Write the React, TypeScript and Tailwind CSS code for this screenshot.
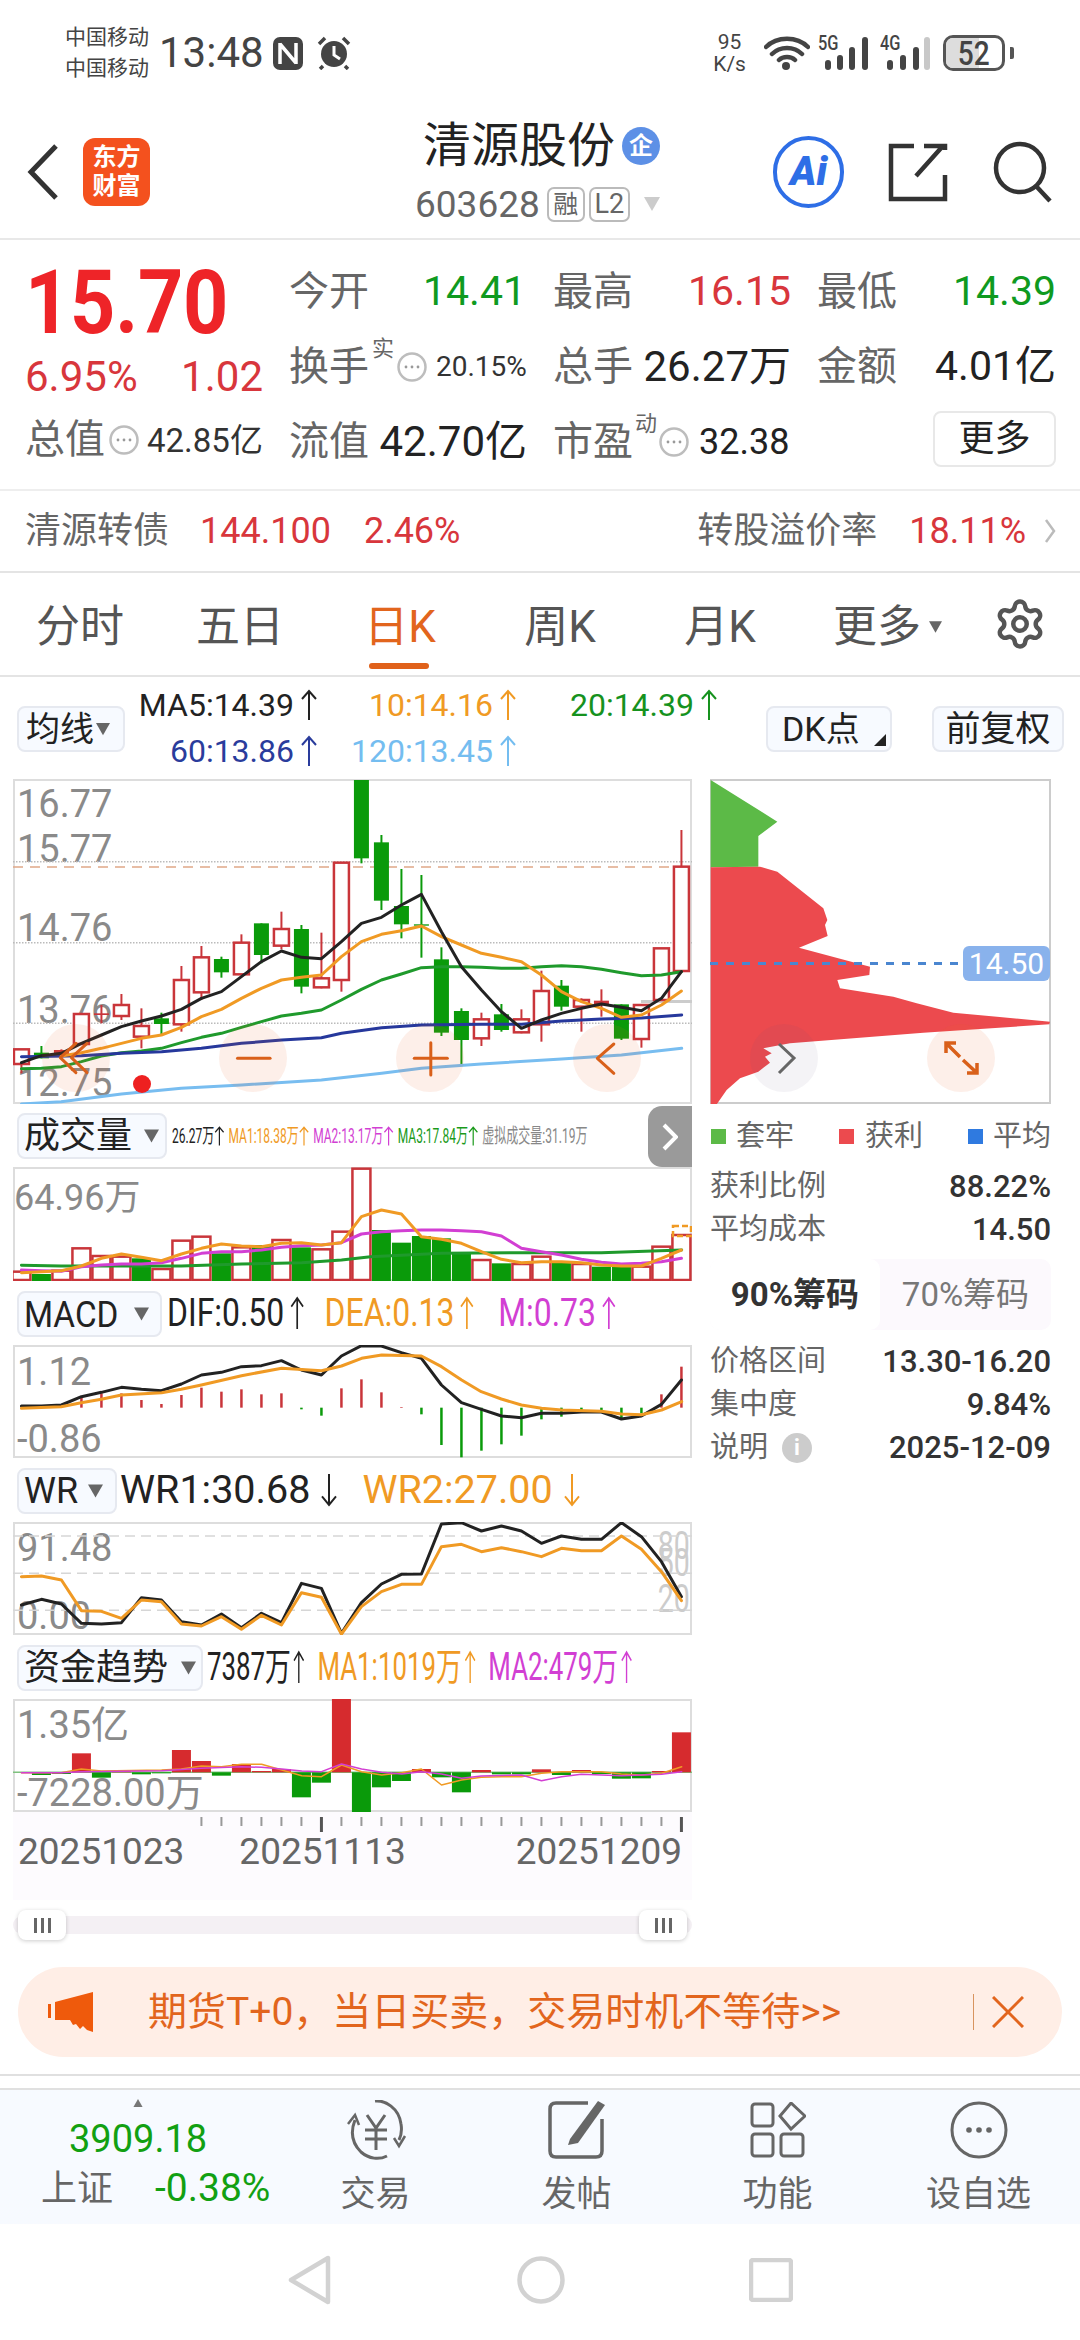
import React from "react";
import { Settings } from "lucide-react";

const RED = "#c9353a";
const GREEN = "#0a9a0a";
const X = (z: number) => z / 2.24;
const line = (pts: number[][], oy: number) => pts.map(([a, b]) => `${X(a)},${oy + b / 3}`).join(" ");
const CX = Array.from({ length: 34 }, (_, i) => 48 + i * 44.8);

type C = [string, number, number, number?, number?];
const candles: C[] = [
  ["r", 1078, 1122, 1078, 1150], ["g", 1088, 1105, 1068, 1105], ["f", 1080, 1095, 1078, 1100], ["r", 972, 1062, 970, 1062],
  ["f", 970, 975, 945, 1000], ["r", 945, 978, 912, 990], ["r", 1008, 1040, 955, 1075], ["g", 985, 1002, 968, 1032],
  ["r", 870, 1003, 828, 1025], ["r", 802, 907, 768, 930], ["g", 807, 847, 800, 863], ["r", 758, 853, 733, 855],
  ["g", 700, 795, 700, 820], ["r", 717, 767, 665, 778], ["g", 717, 890, 705, 910], ["r", 865, 892, 728, 895],
  ["r", 518, 870, 518, 905], ["g", 270, 505, 270, 520], ["g", 457, 632, 435, 660], ["g", 648, 703, 537, 745],
  ["g", 703, 707, 555, 803], ["g", 808, 1028, 772, 1038], ["g", 963, 1050, 955, 1122], ["r", 988, 1045, 968, 1068],
  ["g", 973, 1020, 942, 1025], ["r", 988, 1027, 958, 1030], ["r", 903, 1003, 842, 1055], ["g", 887, 950, 870, 962],
  ["r", 930, 950, 925, 1025], ["f", 932, 942, 898, 980], ["g", 943, 1046, 943, 1050], ["r", 945, 1047, 945, 1073],
  ["r", 775, 930, 775, 930], ["r", 530, 843, 420, 843],
];
const ma5 = [1118, 1097, 1090, 1060, 1035, 1010, 993, 978, 958, 925, 905, 860, 815, 783, 802, 806, 755, 700, 682, 645, 613, 725, 830, 900, 965, 1015, 990, 970, 955, 942, 952, 962, 925, 845];
const ma10 = [1104, 1102, 1098, 1088, 1075, 1060, 1045, 1035, 1012, 980, 958, 925, 895, 870, 862, 855, 800, 755, 733, 722, 708, 740, 765, 790, 802, 815, 855, 905, 935, 955, 982, 975, 945, 903];
const ma20 = [1136, 1135, 1130, 1115, 1098, 1088, 1083, 1075, 1058, 1042, 1030, 1012, 995, 978, 970, 960, 930, 898, 870, 852, 833, 830, 830, 832, 835, 835, 830, 827, 830, 838, 848, 857, 855, 845];
const ma60 = [[48, 1100], [182, 1097], [272, 1090], [362, 1085], [451, 1075], [541, 1060], [631, 1050], [720, 1043], [765, 1030], [855, 1013], [944, 1005], [1078, 1003], [1168, 1003], [1258, 993], [1347, 987], [1437, 984], [1527, 975]];
const ma120 = [[48, 1242], [137, 1235], [272, 1212], [406, 1195], [541, 1185], [720, 1170], [855, 1150], [944, 1135], [1078, 1122], [1258, 1107], [1392, 1095], [1527, 1075]];
const byIdx = (a: number[]) => a.map((v, i) => [CX[i], v]);

const volT: [string, number][] = [["r", 485], ["g", 492], ["r", 482], ["r", 415], ["r", 438], ["r", 440], ["g", 445], ["r", 477], ["r", 392], ["r", 380], ["g", 430], ["r", 412], ["g", 405], ["r", 390], ["g", 412], ["r", 418], ["r", 365], ["r", 176], ["g", 360], ["g", 398], ["g", 378], ["g", 385], ["g", 430], ["r", 450], ["g", 460], ["r", 462], ["r", 440], ["g", 458], ["r", 462], ["g", 470], ["g", 470], ["r", 470], ["r", 410], ["r", 375]];
const volA = [488, 485, 482, 468, 445, 432, 442, 452, 432, 415, 402, 408, 410, 400, 398, 405, 398, 320, 300, 312, 380, 388, 400, 425, 448, 458, 455, 455, 458, 465, 468, 468, 445, 420];
const volB = [480, 482, 484, 470, 465, 462, 462, 458, 445, 430, 425, 425, 420, 412, 407, 405, 398, 372, 365, 362, 360, 360, 362, 365, 378, 415, 425, 435, 448, 457, 462, 460, 455, 445];
const volC = [[48, 466], [137, 468], [272, 468], [406, 468], [541, 462], [676, 458], [765, 450], [830, 440], [989, 430], [1168, 428], [1347, 428], [1527, 420]];

const macdT = [0, 0, 0, 860, 850, 850, 870, 882, 855, 833, 845, 838, 853, 850, 898, 917, 835, 808, 847, 891, 913, 1005, 1042, 1022, 1003, 977, 928, 920, 908, 905, 925, 910, 853, 770];
const dif = [888, 888, 885, 860, 847, 832, 838, 842, 822, 795, 787, 770, 767, 752, 780, 795, 738, 707, 708, 728, 745, 825, 878, 898, 918, 923, 910, 910, 906, 906, 927, 918, 883, 810];
const dea = [[48, 895], [137, 890], [182, 878], [227, 868], [272, 855], [362, 848], [406, 838], [451, 825], [541, 797], [631, 775], [720, 782], [765, 768], [810, 745], [855, 735], [944, 738], [989, 770], [1034, 810], [1078, 845], [1123, 867], [1168, 885], [1213, 895], [1258, 900], [1347, 904], [1392, 912], [1437, 914], [1482, 900], [1527, 875]];

const wr1 = [405, 388, 402, 460, 462, 458, 383, 390, 455, 465, 432, 473, 430, 458, 340, 355, 490, 398, 342, 313, 312, 162, 158, 183, 168, 183, 220, 198, 208, 208, 158, 200, 275, 380];
const wr2 = [320, 318, 330, 422, 424, 445, 390, 395, 462, 468, 440, 478, 436, 465, 368, 382, 492, 410, 365, 343, 343, 230, 223, 245, 233, 245, 260, 235, 242, 242, 198, 238, 305, 392];

const fundT = [907, 915, 912, 850, 923, 903, 913, 910, 840, 873, 917, 882, 903, 897, 982, 938, 687, 1026, 952, 933, 897, 922, 967, 900, 913, 913, 898, 915, 900, 912, 926, 925, 903, 787];
const fundA = [[48, 908], [137, 908], [182, 897], [227, 903], [362, 900], [406, 897], [451, 888], [496, 890], [541, 883], [586, 883], [631, 900], [676, 917], [720, 920], [765, 885], [810, 905], [855, 915], [900, 908], [944, 897], [989, 945], [1034, 930], [1078, 922], [1123, 920], [1168, 920], [1213, 910], [1258, 905], [1347, 905], [1392, 912], [1437, 915], [1482, 910], [1527, 890]];
const fundB = [[48, 908], [137, 908], [182, 905], [362, 902], [451, 895], [541, 890], [586, 892], [631, 897], [676, 903], [720, 905], [765, 882], [810, 897], [855, 907], [900, 912], [944, 905], [989, 912], [1034, 925], [1078, 918], [1168, 915], [1213, 932], [1258, 920], [1302, 913], [1392, 917], [1437, 915], [1482, 913], [1527, 905]];

function PL({ pts, oy, c, w = 3 }: { pts: number[][]; oy: number; c: string; w?: number }) {
  return <polyline points={line(pts, oy)} fill="none" stroke={c} strokeWidth={w} strokeLinejoin="round" strokeLinecap="round" />;
}

function Plot({ top, h, children }: { top: number; h: number; children: React.ReactNode }) {
  return (
    <svg className="absolute inset-0 block" width={679} height={h} viewBox={`13 ${top} 679 ${h}`}>
      {children}
    </svg>
  );
}

function Tri({ c = "#666", w = 16, h = 14, up = false }: { c?: string; w?: number; h?: number; up?: boolean }) {
  return (
    <svg width={w} height={h} viewBox="0 0 16 14" className="block shrink-0">
      <path d={up ? "M8 0 16 14H0Z" : "M0 0H16L8 14Z"} fill={c} />
    </svg>
  );
}

function Arrow({ c, down = false, h = 32 }: { c: string; down?: boolean; h?: number }) {
  return (
    <svg width={18} height={h} viewBox="0 0 18 32" className="block shrink-0" preserveAspectRatio="none">
      {down ? (
        <path d="M9 1V30M2 22l7 8 7-8" fill="none" stroke={c} strokeWidth={2} />
      ) : (
        <path d="M9 31V2M2 10l7-8 7 8" fill="none" stroke={c} strokeWidth={2} />
      )}
    </svg>
  );
}

function Dots() {
  return (
    <svg width={30} height={30} viewBox="0 0 30 30" className="block shrink-0">
      <circle cx={15} cy={15} r={13.5} fill="none" stroke="#bdbdbd" strokeWidth={2.5} />
      <circle cx={9} cy={15} r={1.4} fill="#999" />
      <circle cx={15} cy={15} r={1.4} fill="#999" />
      <circle cx={21} cy={15} r={1.4} fill="#999" />
    </svg>
  );
}

function Sel({ className, children }: { className: string; children: React.ReactNode }) {
  return (
    <div className={`flex h-[46px] shrink-0 items-center rounded-[8px] border-2 border-[#e6e9f0] bg-[#f7faff] text-[#222] ${className}`}>
      {children}
    </div>
  );
}

function Signal({ label, bars, last }: { label: string; bars: number[]; last: string }) {
  const hs = [10, 15, 23, 33];
  return (
    <div className="relative h-[36px] w-[52px] shrink-0">
      <svg width={52} height={36} viewBox="0 0 52 36" className="absolute inset-0">
        {bars.map((x, i) => (
          <rect key={i} x={x} y={35 - hs[i]} width={6} height={hs[i]} rx={3} fill={i === 3 ? last : "#444"} />
        ))}
      </svg>
      <span className="absolute left-0 top-[-2px] origin-left scale-x-[0.78] text-[21px] font-medium leading-[21px] text-[#444]">{label}</span>
    </div>
  );
}

function Kv({ k, v }: { k: React.ReactNode; v: string }) {
  return (
    <div className="flex h-[43px] items-center justify-between">
      <span className="text-[29px] leading-none text-[#666]">{k}</span>
      <span className="text-[31px] font-medium leading-none text-[#333]">{v}</span>
    </div>
  );
}

function AppIcon({ label, children }: { label: string; children: React.ReactNode }) {
  return (
    <div className="flex w-[201px] shrink-0 flex-col items-center pt-[8px]">
      <div className="flex h-[64px] items-center justify-center">{children}</div>
      <span className="mt-[15px] text-[35px] leading-none text-[#666]">{label}</span>
    </div>
  );
}

const axis = "absolute text-[38px] leading-none text-[#8a8a8a]";

export default function App() {
  return (
    <div className="relative h-[2340px] w-[1080px] overflow-hidden bg-white font-[family-name:Roboto,'Noto_Sans_CJK_SC',sans-serif]">
      {/* status bar */}
      <div className="flex h-[100px] items-center pl-[65px] pt-[6px]">
        <div className="flex flex-col text-[21px] leading-[31px] text-[#444]">
          <span>中国移动</span>
          <span>中国移动</span>
        </div>
        <span className="ml-[10px] text-[42px] leading-none text-[#444]">13:48</span>
        <svg width={30} height={33} viewBox="0 0 30 33" className="ml-[9px] block shrink-0">
          <rect width={30} height={33} rx={7} fill="#444" />
          <path d="M7 6v21M7 7l16 19M23 6v21" fill="none" stroke="#fff" strokeWidth={3.5} />
        </svg>
        <svg width={34} height={34} viewBox="0 0 34 34" className="ml-[14px] block shrink-0">
          <circle cx={17} cy={18} r={13} fill="#444" />
          <path d="M17 10v9l6 4" fill="none" stroke="#fff" strokeWidth={3} />
          <path d="M2 8 8 2M32 8l-6-6M6 30l-3 3M28 30l3 3" stroke="#444" strokeWidth={3.5} />
        </svg>
        <div className="ml-[361px] flex w-[36px] flex-col items-center text-[#444]">
          <span className="text-[21px] leading-[22px]">95</span>
          <span className="text-[21px] leading-[22px]">K/s</span>
        </div>
        <svg width={46} height={36} viewBox="0 0 46 36" className="ml-[16px] block shrink-0">
          <path d="M2 12C13 1 33 1 44 12M8 19C16 11 30 11 38 19M15 25C19 21 27 21 31 25" fill="none" stroke="#444" strokeWidth={4.5} strokeLinecap="round" />
          <circle cx={22} cy={31} r={4} fill="#444" />
        </svg>
        <div className="ml-[8px]">
          <Signal label="5G" bars={[7, 19, 31, 44]} last="#444" />
        </div>
        <div className="ml-[10px]">
          <Signal label="4G" bars={[7, 20, 33, 44]} last="#c8c8c8" />
        </div>
        <div className="relative ml-[11px] flex h-[36px] w-[62px] items-center justify-center overflow-hidden rounded-[10px] border-[3px] border-[#555]">
          <div className="absolute inset-y-0 left-0 w-[33px] bg-[#dddddd]" />
          <span className="relative origin-center scale-x-[0.85] text-[33px] font-medium leading-none text-[#444]">52</span>
        </div>
        <div className="ml-[5px] h-[12px] w-[4px] rounded-r-[2px] bg-[#555]" />
      </div>

      {/* title bar */}
      <div className="flex h-[140px] items-center border-b-2 border-[#e8e8e8] pt-[6px]">
        <svg width={32} height={56} viewBox="0 0 32 56" className="ml-[27px] block shrink-0">
          <path d="M29 2 4 28l25 26" fill="none" stroke="#333" strokeWidth={5} strokeLinejoin="miter" />
        </svg>
        <div className="ml-[24px] flex h-[68px] w-[67px] shrink-0 flex-col items-center justify-center rounded-[12px] bg-[#f4511e] text-[24px] font-bold leading-[29px] text-[#fff]">
          <span>东方</span>
          <span>财富</span>
        </div>
        <div className="ml-[265px] flex w-[250px] shrink-0 flex-col">
          <div className="flex h-[52px] items-center pl-[8px]">
            <span className="text-[48px] leading-none text-[#222]">清源股份</span>
            <span className="ml-[7px] flex h-[38px] w-[38px] items-center justify-center rounded-full bg-[#5d90e6] text-[24px] font-bold leading-none text-white">企</span>
          </div>
          <div className="mt-[12px] flex h-[40px] items-center">
            <span className="text-[37px] leading-none text-[#666]">603628</span>
            <span className="ml-[7px] flex h-[35px] w-[38px] items-center justify-center rounded-[7px] border-2 border-[#bbb] text-[25px] leading-none text-[#666]">融</span>
            <span className="ml-[4px] flex h-[35px] w-[41px] items-center justify-center rounded-[7px] border-2 border-[#bbb] text-[27px] leading-none text-[#666]">L2</span>
            <div className="ml-[12px]">
              <Tri c="#cccccc" w={20} h={14} />
            </div>
          </div>
        </div>
        <div className="relative ml-[108px] flex h-[72px] w-[71px] shrink-0 items-center justify-center rounded-full border-[4px] border-[#2e6ee6]">
          <span className="text-[40px] font-black italic leading-none text-[#2e6ee6]">Ai</span>
        </div>
        <svg width={60} height={60} viewBox="0 0 60 60" className="ml-[44px] block shrink-0">
          <path d="M26 4H3v53h54V33" fill="none" stroke="#333" strokeWidth={4.5} />
          <path d="M28 34 54 5M36 4h21v4" fill="none" stroke="#333" strokeWidth={4.5} />
        </svg>
        <svg width={62} height={62} viewBox="0 0 62 62" className="ml-[44px] block shrink-0">
          <circle cx={28} cy={27} r={24} fill="none" stroke="#333" strokeWidth={4.5} />
          <path d="M44 45 58 60" fill="none" stroke="#333" strokeWidth={4.5} />
        </svg>
      </div>

      {/* quote */}
      <div className="flex h-[251px] border-b-2 border-[#eeeeee] pt-[13px]">
        <div className="w-[289px] shrink-0 pl-[25px] pr-[26px]">
          <div className="flex h-[96px] items-center pt-[4px]">
            <span className="origin-left scale-y-[1.13] text-[79px] font-bold leading-none tracking-[-0.2px] text-[#ee2428]">15.70</span>
          </div>
          <div className="flex h-[56px] items-center justify-between text-[42px] leading-none text-[#d8363c]">
            <span>6.95%</span>
            <span>1.02</span>
          </div>
          <div className="flex h-[70px] items-center whitespace-nowrap">
            <span className="text-[40px] leading-none text-[#666]">总值</span>
            <div className="ml-[4px]">
              <Dots />
            </div>
            <span className="ml-[8px] text-[33px] leading-none text-[#333]">42.85亿</span>
          </div>
        </div>
        <div className="grid h-[225px] grid-cols-[264px_264px_239px] grid-rows-[75px_75px_75px] whitespace-nowrap pt-[1px] text-[40px] leading-none">
          <div className="flex items-center justify-between pr-[27px]"><span className="text-[#666]">今开</span><span className="text-[41px] text-[#0f9a1f]">14.41</span></div>
          <div className="flex items-center justify-between pr-[26px]"><span className="text-[#666]">最高</span><span className="text-[41px] text-[#d8363c]">16.15</span></div>
          <div className="flex items-center justify-between"><span className="text-[#666]">最低</span><span className="text-[41px] text-[#0f9a1f]">14.39</span></div>

          <div className="flex items-center">
            <span className="text-[#666]">换手</span>
            <span className="mb-[36px] ml-[3px] text-[22px] leading-none text-[#666]">实</span>
            <div className="ml-[3px]"><Dots /></div>
            <span className="ml-[9px] text-[28px] text-[#333]">20.15%</span>
          </div>
          <div className="flex items-center justify-between pr-[26px]"><span className="text-[#666]">总手</span><span className="text-[42px] text-[#222]">26.27万</span></div>
          <div className="flex items-center justify-between"><span className="text-[#666]">金额</span><span className="text-[41px] text-[#222]">4.01亿</span></div>

          <div className="flex items-center justify-between pr-[26px]"><span className="text-[#666]">流值</span><span className="text-[42px] text-[#222]">42.70亿</span></div>
          <div className="flex items-center">
            <span className="text-[#666]">市盈</span>
            <span className="mb-[36px] ml-[2px] text-[22px] leading-none text-[#666]">动</span>
            <div className="ml-[2px]"><Dots /></div>
            <span className="ml-[10px] text-[36px] text-[#222]">32.38</span>
          </div>
          <div className="flex items-center justify-end">
            <div className="mt-[-6px] flex h-[56px] w-[123px] items-center justify-center rounded-[8px] border-2 border-[#e8e8e8] text-[36px] text-[#222]">更多</div>
          </div>
        </div>
      </div>

      {/* bond */}
      <div className="flex h-[82px] items-center border-b-2 border-[#e4e4e4] pl-[25px] pr-[24px] text-[36px] leading-none">
        <span className="text-[#666]">清源转债</span>
        <span className="ml-[31px] text-[#d8363c]">144.100</span>
        <span className="ml-[33px] text-[#d8363c]">2.46%</span>
        <span className="ml-auto text-[#666]">转股溢价率</span>
        <span className="ml-[32px] text-[#d8363c]">18.11%</span>
        <svg width={12} height={26} viewBox="0 0 12 26" className="ml-[18px] block shrink-0">
          <path d="M2 2 10 13 2 24" fill="none" stroke="#bbb" strokeWidth={2.5} />
        </svg>
      </div>

      {/* tabs */}
      <div className="flex h-[104px] items-center border-b-2 border-[#e4e4e4] pt-[6px] text-[44px] leading-none text-[#555]">
        <div className="w-[160px] shrink-0 text-center">分时</div>
        <div className="w-[160px] shrink-0 text-center">五日</div>
        <div className="relative flex h-full w-[160px] shrink-0 items-center justify-center text-[#e2651d]">
          <span>日K</span>
          <div className="absolute bottom-[6px] left-[49px] h-[6px] w-[60px] rounded-[3px] bg-[#e0611a]" />
        </div>
        <div className="w-[160px] shrink-0 text-center">周K</div>
        <div className="w-[160px] shrink-0 text-center">月K</div>
        <div className="flex w-[160px] shrink-0 items-center pl-[33px]">
          <span>更多</span>
          <div className="ml-[8px]"><Tri c="#666" w={13} h={12} /></div>
        </div>
        <Settings className="ml-[33px] mt-[-6px] shrink-0" size={54} strokeWidth={2} color="#555" />
      </div>

      {/* MA legend */}
      <div className="flex h-[102px] items-start">
        <Sel className="ml-[17px] mt-[29px] w-[108px] pl-[7px]">
          <span className="text-[34px] leading-none">均线</span>
          <div className="ml-[2px]"><Tri w={14} h={14} /></div>
        </Sel>
        <div className="ml-[15px] mt-[5px] grid w-[578px] shrink-0 grid-cols-[178px_199px_201px] grid-rows-[46px_46px] text-[32px] leading-none">
          <div className="flex items-center justify-end gap-[6px] text-[#222]">MA5:14.39<Arrow c="#222" /></div>
          <div className="flex items-center justify-end gap-[6px] text-[#f09a24]">10:14.16<Arrow c="#f09a24" /></div>
          <div className="flex items-center justify-end gap-[6px] text-[#16921e]">20:14.39<Arrow c="#16921e" /></div>
          <div className="flex items-center justify-end gap-[6px] text-[#2a3c9c]">60:13.86<Arrow c="#2a3c9c" /></div>
          <div className="flex items-center justify-end gap-[6px] text-[#74bdf0]">120:13.45<Arrow c="#74bdf0" /></div>
        </div>
        <Sel className="relative ml-[48px] mt-[29px] w-[126px] justify-start pl-[14px]">
          <span className="text-[34px] leading-none">DK点</span>
          <svg width={12} height={12} viewBox="0 0 12 12" className="absolute bottom-[4px] right-[4px] block">
            <path d="M12 0V12H0Z" fill="#222" />
          </svg>
        </Sel>
        <Sel className="ml-[40px] mt-[29px] w-[132px] justify-center">
          <span className="text-[35px] leading-none">前复权</span>
        </Sel>
      </div>

      <div className="flex">
        {/* left charts */}
        <div className="ml-[13px] w-[679px] shrink-0">
          <div className="relative h-[325px] overflow-hidden outline-2 -outline-offset-2 outline-[#dddddd]">
            <span className={`${axis} left-[4px] top-[6px]`}>16.77</span>
            <span className={`${axis} left-[4px] top-[51px]`}>15.77</span>
            <span className={`${axis} left-[4px] top-[130px]`}>14.76</span>
            <span className={`${axis} left-[4px] top-[212px]`}>13.76</span>
            <span className={`${axis} left-[4px] top-[285px]`}>12.75</span>
            <Plot top={779} h={325}>
              {[515, 758, 1000].map((z) => (
                <line key={z} x1={13} x2={692} y1={690 + z / 3} y2={690 + z / 3} stroke="#bbbbbb" strokeWidth={1.5} strokeDasharray="1.5 1.5" />
              ))}
              <line x1={13} x2={692} y1={867} y2={867} stroke="#e0a888" strokeWidth={1.5} strokeDasharray="10 7" />
              <rect x={641} y={1000} width={51} height={3} fill="#cccccc" />
              {candles.map(([t, a, b, h, l], i) => {
                const cx = X(CX[i]);
                const col = t === "g" ? GREEN : RED;
                return (
                  <g key={i}>
                    <line x1={cx} x2={cx} y1={690 + (h ?? a) / 3} y2={690 + (l ?? b) / 3} stroke={col} strokeWidth={2} />
                    <rect x={cx - 7.5} y={690 + a / 3} width={15} height={(b - a) / 3} fill={t === "r" ? "#fff" : col} stroke={t === "r" ? RED : "none"} strokeWidth={2.5} />
                  </g>
                );
              })}
              <PL pts={byIdx(ma20)} oy={690} c="#1f9a2c" />
              <PL pts={ma60} oy={690} c="#26389c" />
              <PL pts={ma120} oy={690} c="#78bdf0" />
              <PL pts={byIdx(ma10).slice(2)} oy={690} c="#f09a24" />
              <PL pts={byIdx(ma5)} oy={690} c="#222222" />
              <circle cx={142} cy={1084} r={9} fill="#ee2020" />
              {[76, 253, 430, 607].map((cx) => (
                <circle key={cx} cx={cx} cy={1058} r={34} fill="#e8602a" fillOpacity={0.1} />
              ))}
              <PL pts={[[170, 1060], [135, 1103], [170, 1148]]} oy={690} c="#d9601a" />
              <PL pts={[[195, 1060], [160, 1103], [195, 1148]]} oy={690} c="#d9601a" />
              <PL pts={[[532, 1105], [605, 1105]]} oy={690} c="#d9601a" />
              <PL pts={[[928, 1105], [1002, 1105]]} oy={690} c="#d9601a" />
              <PL pts={[[965, 1058], [965, 1155]]} oy={690} c="#d9601a" />
              <PL pts={[[1375, 1062], [1338, 1105], [1375, 1150]]} oy={690} c="#d9601a" />
            </Plot>
          </div>

          {/* volume header */}
          <div className="relative flex h-[63px] items-start pl-[4px] pt-[9px]">
            <Sel className="w-[150px] pl-[5px]">
              <span className="text-[36px] leading-none">成交量</span>
              <div className="ml-[12px]"><Tri w={15} h={14} /></div>
            </Sel>
            <div className="ml-[5px] mt-[13px] flex shrink-0 origin-left scale-x-[0.6] whitespace-nowrap text-[20px] leading-none">
              <span className="flex items-center text-[#222]">26.27万<Arrow c="#222" h={20} /></span>
              <span className="ml-[6px] flex items-center text-[#f09a24]">MA1:18.38万<Arrow c="#f09a24" h={20} /></span>
              <span className="ml-[6px] flex items-center text-[#d23fd3]">MA2:13.17万<Arrow c="#d23fd3" h={20} /></span>
              <span className="ml-[6px] flex items-center text-[#1a9a1a]">MA3:17.84万<Arrow c="#1a9a1a" h={20} /></span>
              <span className="ml-[6px] text-[#888]">虚拟成交量:31.19万</span>
            </div>
            <div className="absolute right-0 top-[2px] flex h-[61px] w-[44px] items-center justify-center rounded-bl-[14px] rounded-tl-[14px] bg-[#9a9a9a]">
              <svg width={16} height={28} viewBox="0 0 16 28" className="block">
                <path d="M2 2 14 14 2 26" fill="none" stroke="#fff" strokeWidth={4} />
              </svg>
            </div>
          </div>
          <div className="relative h-[114px] overflow-hidden outline-2 -outline-offset-2 outline-[#dddddd]">
            <span className="absolute left-[1px] top-[13px] text-[36px] leading-none text-[#8a8a8a]">64.96万</span>
            <Plot top={1167} h={114}>
              {volT.map(([t, z], i) => {
                const cx = X(CX[i]);
                const y = 1110 + z / 3;
                return t === "g" ? (
                  <rect key={i} x={cx - 9.5} y={y} width={19} height={1281 - y} fill={GREEN} />
                ) : (
                  <rect key={i} x={cx - 9} y={y} width={18} height={1280 - y} fill="#fff" stroke={RED} strokeWidth={2.5} />
                );
              })}
              <rect x={673} y={1226} width={18} height={10} fill="none" stroke="#f09a24" strokeWidth={2.5} strokeDasharray="6 3" />
              <PL pts={volC} oy={1110} c="#1f9a2c" />
              <PL pts={byIdx(volB)} oy={1110} c="#d23fd3" />
              <PL pts={byIdx(volA)} oy={1110} c="#f09a24" />
            </Plot>
          </div>

          {/* MACD */}
          <div className="flex h-[64px] items-start pl-[4px] pt-[10px]">
            <Sel className="w-[145px] pl-[5px]">
              <span className="origin-left scale-x-[0.9] text-[37px] leading-none">MACD</span>
              <div className="ml-[5px]"><Tri w={15} h={14} /></div>
            </Sel>
            <div className="ml-[5px] flex shrink-0 origin-left scale-x-[0.84] items-center whitespace-nowrap pt-[3px] text-[38px] leading-none">
              <span className="flex items-center text-[#222]">DIF:0.50<span className="ml-[6px]"><Arrow c="#222" h={34} /></span></span>
              <span className="ml-[24px] flex items-center text-[#f09a24]">DEA:0.13<span className="ml-[6px]"><Arrow c="#f09a24" h={34} /></span></span>
              <span className="ml-[28px] flex items-center text-[#d23fd3]">M:0.73<span className="ml-[6px]"><Arrow c="#d23fd3" h={34} /></span></span>
            </div>
          </div>
          <div className="relative h-[113px] overflow-hidden outline-2 -outline-offset-2 outline-[#dddddd]">
            <span className={`${axis} left-[4px] top-[8px]`}>1.12</span>
            <span className={`${axis} left-[4px] top-[75px]`}>-0.86</span>
            <Plot top={1345} h={113}>
              {macdT.map((z, i) =>
                z === 0 ? null : (
                  <line key={i} x1={X(CX[i])} x2={X(CX[i])} y1={1110 + z / 3} y2={1110 + 893 / 3} stroke={z < 893 ? RED : GREEN} strokeWidth={2.5} />
                )
              )}
              <PL pts={byIdx(dif)} oy={1110} c="#222222" />
              <PL pts={dea} oy={1110} c="#f09a24" />
            </Plot>
          </div>

          {/* WR */}
          <div className="flex h-[64px] items-start pl-[4px] pt-[10px]">
            <Sel className="w-[100px] pl-[5px]">
              <span className="text-[36px] leading-none">WR</span>
              <div className="ml-[10px]"><Tri w={15} h={14} /></div>
            </Sel>
            <div className="ml-[3px] flex shrink-0 items-center whitespace-nowrap pt-[2px] text-[39.5px] leading-none">
              <span className="flex items-center text-[#222]">WR1:30.68<span className="ml-[10px]"><Arrow c="#222" down h={34} /></span></span>
              <span className="ml-[24px] flex items-center text-[#f09a24]">WR2:27.00<span className="ml-[10px]"><Arrow c="#f09a24" down h={34} /></span></span>
            </div>
          </div>
          <div className="relative h-[113px] overflow-hidden outline-2 -outline-offset-2 outline-[#dddddd]">
            <span className={`${axis} left-[4px] top-[7px]`}>91.48</span>
            <span className={`${axis} left-[4px] top-[75px]`}>0.00</span>
            <span className="absolute right-[2px] top-[5px] origin-right scale-x-[0.75] text-[38px] leading-none text-[#cccccc]">80</span>
            <span className="absolute right-[2px] top-[22px] origin-right scale-x-[0.75] text-[38px] leading-none text-[#cccccc]">50</span>
            <span className="absolute right-[2px] top-[58px] origin-right scale-x-[0.75] text-[38px] leading-none text-[#cccccc]">20</span>
            <Plot top={1522} h={113}>
              {[198, 310, 421].map((z) => (
                <line key={z} x1={13} x2={692} y1={1470 + z / 3} y2={1470 + z / 3} stroke="#d6d6d6" strokeWidth={1.5} strokeDasharray="10 6" />
              ))}
              <PL pts={byIdx(wr1)} oy={1470} c="#222222" />
              <PL pts={byIdx(wr2)} oy={1470} c="#f09a24" />
            </Plot>
          </div>

          {/* funds */}
          <div className="flex h-[64px] items-start pl-[4px] pt-[10px]">
            <Sel className="w-[186px] pl-[5px]">
              <span className="text-[36px] leading-none">资金趋势</span>
              <div className="ml-[13px]"><Tri w={15} h={14} /></div>
            </Sel>
            <div className="ml-[4px] flex shrink-0 origin-left scale-x-[0.68] items-center whitespace-nowrap pt-[3px] text-[38px] leading-none">
              <span className="flex items-center text-[#222]">7387万<span className="ml-[3px]"><Arrow c="#222" h={34} /></span></span>
              <span className="ml-[18px] flex items-center text-[#f09a24]">MA1:1019万<span className="ml-[3px]"><Arrow c="#f09a24" h={34} /></span></span>
              <span className="ml-[18px] flex items-center text-[#d23fd3]">MA2:479万<span className="ml-[3px]"><Arrow c="#d23fd3" h={34} /></span></span>
            </div>
          </div>
          <div className="relative h-[113px] overflow-hidden outline-2 -outline-offset-2 outline-[#dddddd]">
            <span className={`${axis} left-[4px] top-[7px]`}>1.35亿</span>
            <span className={`${axis} left-[4px] top-[75px]`}>-7228.00万</span>
            <Plot top={1699} h={113}>
              <line x1={13} x2={692} y1={1470 + 907 / 3} y2={1470 + 907 / 3} stroke="#7fc27f" strokeWidth={1.5} />
              {fundT.map((z, i) => {
                const y0 = 1470 + 907 / 3;
                const y1 = 1470 + z / 3;
                return <rect key={i} x={X(CX[i]) - 9.5} y={Math.min(y0, y1)} width={19} height={Math.abs(y1 - y0)} fill={z < 907 ? "#d62b2e" : GREEN} />;
              })}
              <PL pts={fundA} oy={1470} c="#f09a24" w={1.5} />
              <PL pts={fundB} oy={1470} c="#d23fd3" w={1.5} />
            </Plot>
          </div>

          {/* date axis */}
          <div className="relative h-[88px] bg-[#fdfbfe] pt-[21px]">
            <svg width={679} height={30} viewBox="13 1812 679 30" className="absolute left-0 top-0 block">
              {CX.slice(9).map((z, i) => {
                const long = (z > 715 && z < 725) || i === CX.length - 10;
                return <line key={i} x1={X(z)} x2={X(z)} y1={1817} y2={long ? 1832 : 1826} stroke={long ? "#555" : "#999"} strokeWidth={long ? 3 : 2} />;
              })}
            </svg>
            <div className="flex text-[37px] leading-[38px] text-[#666]">
              <span className="ml-[5px]">20251023</span>
              <span className="ml-[55px]">20251113</span>
              <span className="ml-[110px]">20251209</span>
            </div>
          </div>

          {/* slider */}
          <div className="relative mt-[10px] flex h-[30px] justify-between px-[5px]">
            <div className="absolute inset-x-0 top-[6px] h-[18px] rounded-[9px] bg-[#f4f0f4]" />
            {[0, 1].map((k) => (
              <div key={k} className="relative flex h-[30px] w-[48px] items-center justify-center gap-[4px] rounded-[8px] bg-white shadow-[0_1px_4px_rgba(0,0,0,0.2)]">
                <div className="h-[15px] w-[3px] bg-[#666]" />
                <div className="h-[15px] w-[3px] bg-[#666]" />
                <div className="h-[15px] w-[3px] bg-[#666]" />
              </div>
            ))}
          </div>
        </div>

        {/* right panel */}
        <div className="ml-[18px] w-[341px] shrink-0">
          <div className="relative h-[325px] overflow-hidden outline-2 -outline-offset-2 outline-[#cccccc]">
            <svg className="absolute inset-0 block" width={341} height={325} viewBox="710 779 341 325">
              <polygon
                fill="#5cba47"
                points={[[62, 270], [262, 395], [205, 438], [205, 530], [62, 532]].map(([a, b]) => `${690 + a / 3},${690 + b / 3}`).join(" ")}
              />
              <polygon
                fill="#ec4a4e"
                points={[[62, 532], [210, 530], [262, 545], [400, 655], [412, 690], [405, 705], [413, 738], [327, 773], [540, 830], [538, 855], [442, 870], [450, 895], [610, 920], [680, 940], [790, 968], [1080, 995], [1078, 1003], [700, 1028], [300, 1060], [220, 1075], [245, 1090], [225, 1100], [240, 1118], [205, 1145], [150, 1165], [110, 1200], [80, 1243], [62, 1243]].map(([a, b]) => `${690 + a / 3},${690 + b / 3}`).join(" ")}
              />
              <line x1={710} x2={958} y1={963.5} y2={963.5} stroke="#4a86d0" strokeWidth={3} strokeDasharray="8 8" />
              <circle cx={784} cy={1058} r={34} fill="#6a5a7a" fillOpacity={0.07} />
              <path d="M779 1044 794 1058 779 1073" fill="none" stroke="#666" strokeWidth={3} />
              <circle cx={961} cy={1058} r={34} fill="#e8602a" fillOpacity={0.1} />
              <path d="M946 1043 960 1057M946 1053V1043H956M977 1073 963 1060M977 1063V1073H967" fill="none" stroke="#d9601a" strokeWidth={3.5} />
            </svg>
            <div className="absolute left-[253px] top-[167px] flex h-[35px] w-[87px] items-center justify-center rounded-[6px] bg-[#89b2ec] text-[30px] leading-none text-white">14.50</div>
          </div>
          <div className="flex h-[61px] items-center pb-[0px] pt-[3px] text-[29px] leading-none text-[#666]">
            <div className="ml-[1px] h-[15px] w-[15px] bg-[#5cba47]" />
            <span className="ml-[10px]">套牢</span>
            <div className="ml-[45px] h-[15px] w-[15px] bg-[#ec4a4e]" />
            <span className="ml-[11px]">获利</span>
            <div className="ml-[45px] h-[15px] w-[15px] bg-[#2f7ae0]" />
            <span className="ml-[10px]">平均</span>
          </div>
          <Kv k="获利比例" v="88.22%" />
          <Kv k="平均成本" v="14.50" />
          <div className="mt-[8px] flex h-[71px] rounded-[10px] bg-[#fcf9fd]">
            <div className="flex w-[170px] items-center justify-center rounded-[10px] bg-white text-[33px] font-bold leading-none text-[#333]">90%筹码</div>
            <div className="flex flex-1 items-center justify-center text-[33px] leading-none text-[#777]">70%筹码</div>
          </div>
          <div className="mt-[10px]">
            <Kv k="价格区间" v="13.30-16.20" />
            <Kv k="集中度" v="9.84%" />
            <Kv
              k={
                <span className="flex items-center">
                  说明
                  <span className="ml-[14px] flex h-[30px] w-[30px] items-center justify-center rounded-full bg-[#cccccc] text-[22px] font-bold leading-none text-white">i</span>
                </span>
              }
              v="2025-12-09"
            />
          </div>
        </div>
      </div>

      {/* banner */}
      <div className="mx-[18px] mt-[27px] flex h-[90px] items-center rounded-[45px] bg-[#ffeee6] pl-[30px] pr-[38px]">
        <svg width={46} height={40} viewBox="0 0 46 40" className="block shrink-0">
          <path d="M0 12h3v14H0ZM7 10 45 0V40l-6-2-4-4-3 3-4-5-3 1-3-5H7Z" fill="#ef5a0c" />
        </svg>
        <span className="ml-[54px] text-[39px] leading-none text-[#e2651d]">期货T+0，当日买卖，交易时机不等待&gt;&gt;</span>
        <div className="ml-auto h-[36px] w-[1px] bg-[#d8945f]" />
        <svg width={32} height={32} viewBox="0 0 32 32" className="ml-[18px] block shrink-0">
          <path d="M1 1 31 31M31 1 1 31" stroke="#e2651d" strokeWidth={3} />
        </svg>
      </div>
      <div className="mt-[17px] h-[2px] bg-[#e0e0e0]" />

      {/* bottom nav */}
      <div className="mt-[12px] flex h-[136px] border-t-2 border-[#e0e0e0] bg-[#f7faff]">
        <div className="w-[275px] shrink-0 pt-[9px]">
          <div className="ml-[128px]"><Tri up c="#777" w={20} h={8} /></div>
          <div className="mt-[13px] pl-[69px] text-[38px] leading-none text-[#12a012]">3909.18</div>
          <div className="mt-[11px] flex items-center pl-[41px]">
            <span className="text-[36px] leading-none text-[#666]">上证</span>
            <span className="ml-[42px] text-[39px] leading-none text-[#12a012]">-0.38%</span>
          </div>
        </div>
        <AppIcon label="交易">
          <svg width={66} height={60} viewBox="0 0 66 60" className="block">
            <path d="M12 20C8 30 8 42 18 52 26 59 36 60 44 56M32 1C42 0 56 8 58 24 59 30 58 36 56 40" fill="none" stroke="#666" strokeWidth={3} />
            <path d="M5 24 12 15 16 25M51 38 56 46 62 36" fill="none" stroke="#666" strokeWidth={2.5} />
            <path d="M24 15 33 28 42 15M22 30H44M22 39H44M33 28V50" fill="none" stroke="#666" strokeWidth={3} />
          </svg>
        </AppIcon>
        <AppIcon label="发帖">
          <svg width={58} height={58} viewBox="0 0 58 58" className="block">
            <path d="M40 2H8Q2 2 2 8V50Q2 56 8 56H48Q54 56 54 50V18" fill="none" stroke="#666" strokeWidth={3.5} />
            <path d="M22 38 50 0 57 4 30 42 20 44Z" fill="#666" />
          </svg>
        </AppIcon>
        <AppIcon label="功能">
          <svg width={56} height={56} viewBox="0 0 56 56" className="block">
            <rect x={2} y={2} width={21} height={22} rx={3} fill="none" stroke="#666" strokeWidth={3} />
            <path d="M41 1 55 14 41 27 30 14Z" fill="none" stroke="#666" strokeWidth={3} />
            <rect x={2} y={32} width={21} height={22} rx={3} fill="none" stroke="#666" strokeWidth={3} />
            <rect x={31} y={32} width={22} height={22} rx={3} fill="none" stroke="#666" strokeWidth={3} />
          </svg>
        </AppIcon>
        <AppIcon label="设自选">
          <svg width={58} height={58} viewBox="0 0 58 58" className="block">
            <circle cx={29} cy={29} r={27} fill="none" stroke="#666" strokeWidth={3} />
            <circle cx={19} cy={29} r={2.8} fill="#666" />
            <circle cx={29} cy={29} r={2.8} fill="#666" />
            <circle cx={39} cy={29} r={2.8} fill="#666" />
          </svg>
        </AppIcon>
      </div>

      {/* system nav */}
      <div className="flex h-[114px] items-center pb-[2px]">
        <svg width={44} height={50} viewBox="0 0 44 50" className="ml-[288px] block shrink-0">
          <path d="M40 3V47L3 25Z" fill="none" stroke="#d2d2d2" strokeWidth={4.5} strokeLinejoin="round" />
        </svg>
        <svg width={48} height={48} viewBox="0 0 48 48" className="ml-[185px] block shrink-0">
          <circle cx={24} cy={24} r={21.5} fill="none" stroke="#d2d2d2" strokeWidth={4.5} />
        </svg>
        <svg width={44} height={44} viewBox="0 0 44 44" className="ml-[184px] block shrink-0">
          <rect x={2} y={2} width={40} height={40} rx={2} fill="none" stroke="#d2d2d2" strokeWidth={4.5} />
        </svg>
      </div>
    </div>
  );
}
